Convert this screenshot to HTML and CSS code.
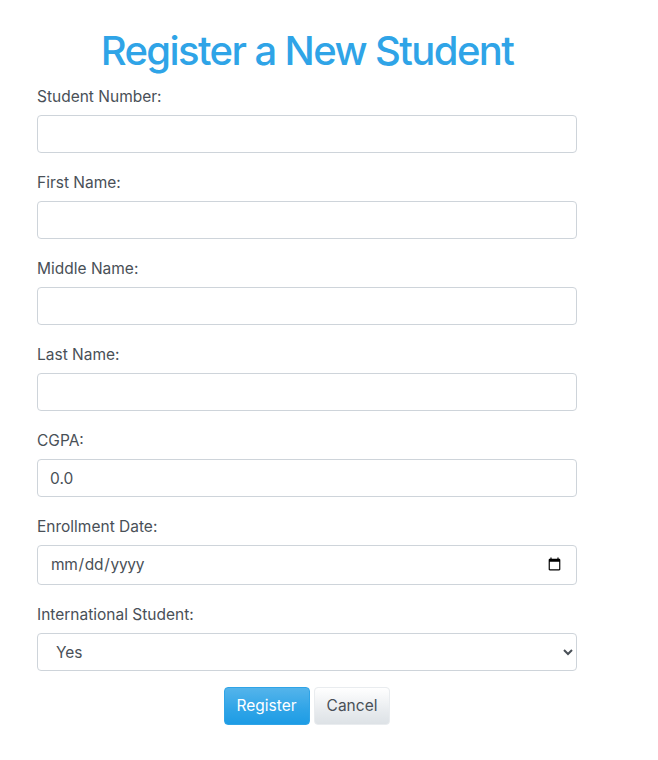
FILE: index.html
```html
<!DOCTYPE html>
<html lang="en">
<head>
<meta charset="utf-8">
<title>Register a New Student</title>
<link rel="stylesheet" href="styles.css">
</head>
<body>
<main class="container">
  <h1 class="title">Register a New Student</h1>
  <form class="form">
    <div class="form-group">
      <label class="label" for="num">Student Number:</label>
      <input class="control" id="num" type="text">
    </div>
    <div class="form-group">
      <label class="label" for="first">First Name:</label>
      <input class="control" id="first" type="text">
    </div>
    <div class="form-group">
      <label class="label" for="middle">Middle Name:</label>
      <input class="control" id="middle" type="text">
    </div>
    <div class="form-group">
      <label class="label" for="last">Last Name:</label>
      <input class="control" id="last" type="text">
    </div>
    <div class="form-group">
      <label class="label" for="cgpa">CGPA:</label>
      <input class="control" id="cgpa" type="text" value="0.0">
    </div>
    <div class="form-group">
      <label class="label" for="date">Enrollment Date:</label>
      <input class="control control-date" id="date" type="date">
    </div>
    <div class="form-group">
      <label class="label" for="intl">International Student:</label>
      <select class="control control-select" id="intl">
        <option>Yes</option>
        <option>No</option>
      </select>
    </div>
    <div class="actions">
      <button class="btn btn-primary" type="submit">Register</button>
      <button class="btn btn-secondary" type="button">Cancel</button>
    </div>
  </form>
</main>
</body>
</html>
```

FILE: styles.css
```css
* { box-sizing: border-box; }

html, body {
  margin: 0;
  padding: 0;
  background: #fff;
}

body {
  font-family: Inter, "Liberation Sans", Arial, sans-serif;
  font-size: 16px;
  line-height: 1.5;
  color: #495057;
}

.container {
  width: 540px;
  margin-left: 37px;
  padding-top: 27px;
}

.title {
  margin: 0 0 8px;
  font-size: 40px;
  font-weight: 500;
  line-height: 1.2;
  letter-spacing: -0.04em;
  color: #2fa4e7;
  text-align: center;
}

.form-group {
  margin-bottom: 16px;
}

.label {
  display: block;
  padding-top: 2px;
  margin-bottom: 6px;
  font-size: 15.5px;
  line-height: 24px;
}

.control {
  display: block;
  width: 100%;
  height: 38px;
  padding: 6px 12px;
  font-family: inherit;
  font-size: 15.5px;
  line-height: 1.5;
  color: #495057;
  background: #fff;
  border: 1px solid #ced4da;
  border-radius: 4px;
}

.control-date {
  height: 40px;
  letter-spacing: -0.02em;
}

.control-select {
  padding-left: 14px;
}

.actions {
  display: flex;
  justify-content: center;
  gap: 4px;
}

.btn {
  height: 38px;
  padding: 6px 12px;
  font-family: inherit;
  font-size: 15.5px;
  line-height: 1.5;
  border-radius: 4px;
  border: 1px solid transparent;
}

.btn-primary {
  color: #fff;
  background-image: linear-gradient(#54b4eb, #2fa4e7 60%, #1d9ce5);
  border-color: #2fa4e7;
}

.btn-secondary {
  color: #495057;
  background-image: linear-gradient(#fff, #e9ecef 60%, #dde2e6);
  border-color: #e9ecef;
}
```
